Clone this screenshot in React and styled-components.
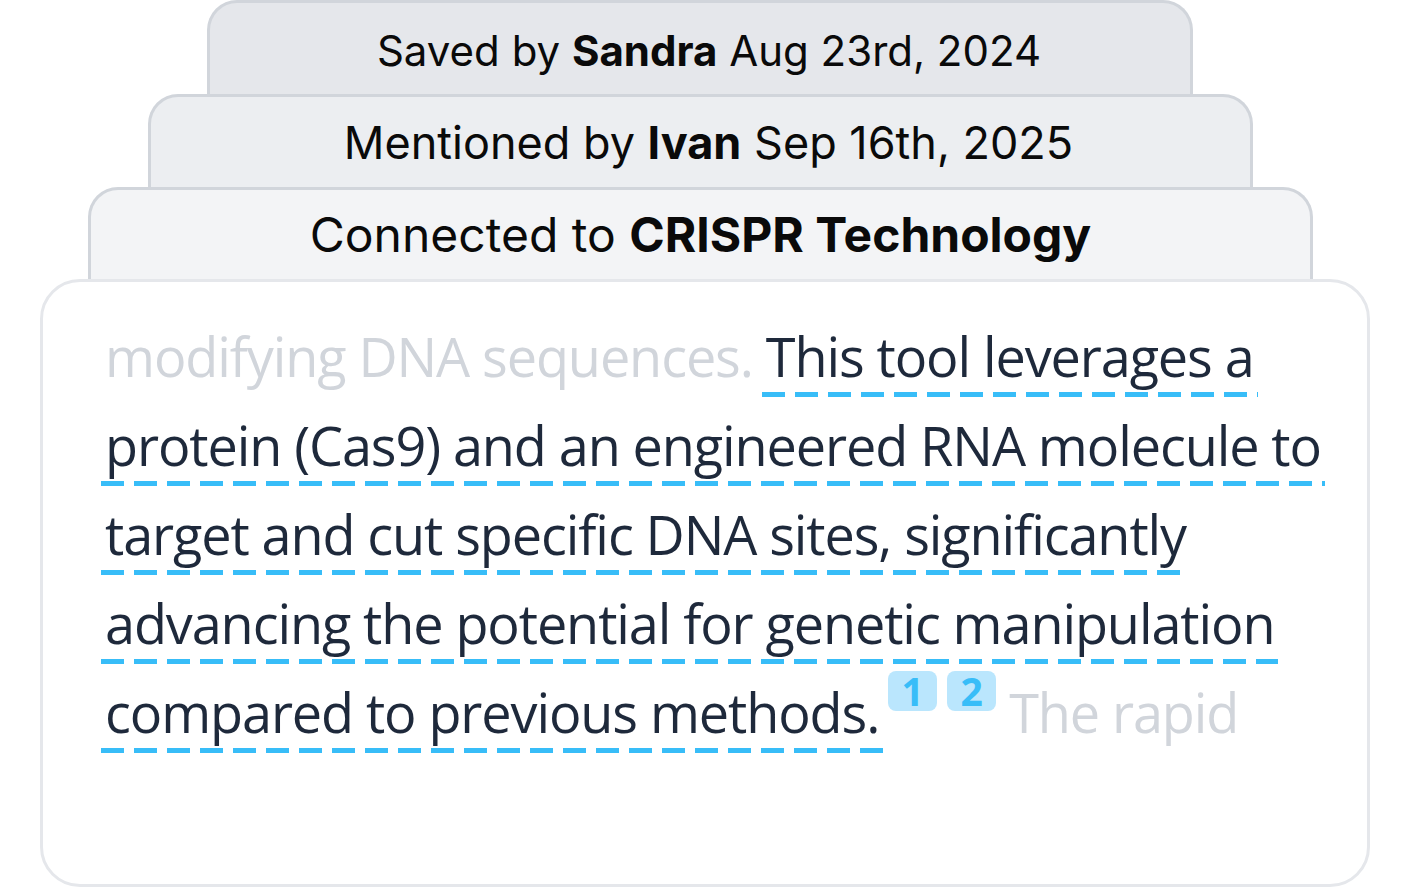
import React from "react";
import styled, { createGlobalStyle } from "styled-components";

const Global = createGlobalStyle`
  html, body { margin: 0; padding: 0; background: #ffffff; }
  body { font-family: "Open Sans", "Noto Sans", sans-serif; }
`;

const Page = styled.div`
  width: 1410px;
  height: 888px;
  overflow: hidden;
  display: flex;
  flex-direction: column;
  align-items: flex-start;
`;

const Tab = styled.div`
  box-sizing: border-box;
  margin-left: ${(p) => p.$left}px;
  width: ${(p) => p.$width}px;
  height: ${(p) => p.$height}px;
  flex-shrink: 0;
  background: ${(p) => p.$bg};
  border: 3px solid #d1d5db;
  border-bottom: none;
  border-radius: 30px 30px 0 0;
  display: flex;
  align-items: center;
  justify-content: center;
  font-family: "Inter", "Noto Sans", sans-serif;
  font-size: ${(p) => p.$size}px;
  color: #0a0a0a;
  white-space: nowrap;
  padding-left: ${(p) => p.$shift || 0}px;
  padding-top: ${(p) => p.$dy || 0}px;
`;

const Strong = styled.b`
  font-weight: 700;
`;

const Card = styled.div`
  box-sizing: border-box;
  margin-left: 40px;
  width: 1330px;
  height: 608px;
  flex-shrink: 0;
  background: #ffffff;
  border: 3px solid #e5e7eb;
  border-radius: 40px;
  padding: 30px 34px 0 62px;
`;

const Para = styled.p`
  margin: 0;
  font-family: "Open Sans", "Noto Sans", sans-serif;
  font-size: 54px;
  letter-spacing: -1.1px;
  line-height: 89px;
  color: #d1d5db;
`;

const Highlight = styled.span`
  color: #1e293b;
  padding: 0 4px 4px;
  margin: 0 -4px;
  background-image: linear-gradient(to right, #38bdf8 0 23px, transparent 23px 33px);
  background-size: 33px 5px;
  background-repeat: repeat-x;
  background-position: left bottom;
  -webkit-box-decoration-break: clone;
  box-decoration-break: clone;
`;

const Badge = styled.span`
  display: inline-flex;
  align-items: center;
  justify-content: center;
  box-sizing: border-box;
  min-width: 49px;
  height: 40px;
  padding: 0 8px;
  margin-left: ${(p) => p.$gap}px;
  border-radius: 8px;
  background: #bae6fd;
  color: #38bdf8;
  font-family: "Open Sans", "Noto Sans", sans-serif;
  font-weight: 700;
  font-size: 39px;
  letter-spacing: 0;
  line-height: 1;
  vertical-align: 27px;
`;

export default function App() {
  return (
    <>
      <Global />
      <Page>
        <Tab $left={207} $width={986} $height={94} $bg="#e5e7eb" $size={42} $shift={18} $dy={4}>
          Saved by&nbsp;<Strong>Sandra</Strong>&nbsp;Aug 23rd, 2024
        </Tab>
        <Tab $left={148} $width={1105} $height={93} $bg="#eceef1" $size={45} $shift={16} $dy={0}>
          Mentioned by&nbsp;<Strong>Ivan</Strong>&nbsp;Sep 16th, 2025
        </Tab>
        <Tab $left={88} $width={1225} $height={92} $bg="#f3f4f6" $size={48} $dy={0}>
          Connected to&nbsp;<Strong>CRISPR Technology</Strong>
        </Tab>
        <Card>
          <Para>
            modifying DNA sequences.{" "}
            <Highlight>
              This tool leverages a protein (Cas9) and an engineered RNA molecule to
              target and cut specific DNA sites, significantly advancing the potential
              for genetic manipulation compared to previous methods.
            </Highlight>
            <Badge $gap={9}>1</Badge>
            <Badge $gap={10}>2</Badge> The rapid
          </Para>
        </Card>
      </Page>
    </>
  );
}
